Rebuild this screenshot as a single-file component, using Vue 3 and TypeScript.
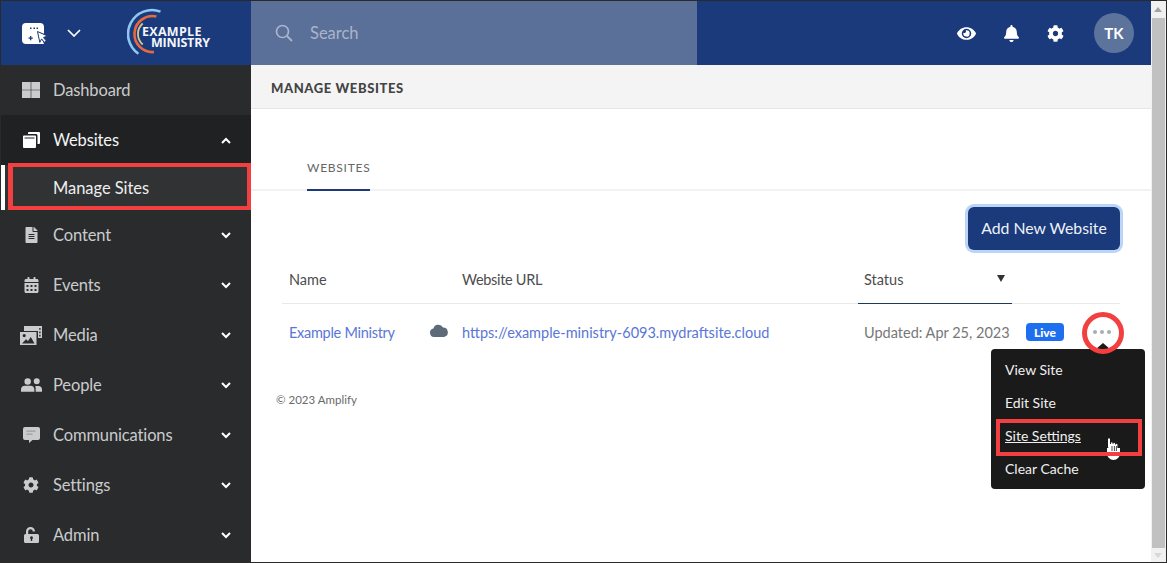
<script setup lang="ts">
interface Icon { vb: string; d: string; d2?: string }
const icons: Record<string, Icon> = {
  dash: { vb: '0 0 18 16', d: 'M0 0h8.700v7.700H0zM9.300 0H18v7.700H9.300zM0 8.300h8.700V16H0zM9.300 8.300H18V16H9.300z' },
  web: { vb: '0 0 17 16', d: 'M5 2V1a1 1 0 0 1 1-1h10a1 1 0 0 1 1 1v10a1 1 0 0 1-1 1h-1.500V3.500A1.500 1.500 0 0 0 13 2zM1 3.400h11a1 1 0 0 1 1 1V15a1 1 0 0 1-1 1H1a1 1 0 0 1-1-1V4.400a1 1 0 0 1 1-1zm.5 2.200v.9h10v-.9z' },
  content: { vb: '0 0 384 512', d: 'M224 136V0H24C10.700 0 0 10.700 0 24v464c0 13.300 10.700 24 24 24h336c13.300 0 24-10.700 24-24V160H248c-13.200 0-24-10.800-24-24zm64 236c0 6.600-5.400 12-12 12H108c-6.600 0-12-5.400-12-12v-8c0-6.600 5.400-12 12-12h168c6.600 0 12 5.400 12 12v8zm0-64c0 6.600-5.400 12-12 12H108c-6.600 0-12-5.400-12-12v-8c0-6.600 5.400-12 12-12h168c6.600 0 12 5.400 12 12v8zm0-72v8c0 6.600-5.400 12-12 12H108c-6.600 0-12-5.400-12-12v-8c0-6.600 5.400-12 12-12h168c6.600 0 12 5.400 12 12zm96-114.100v6.100H256V0h6.100c6.400 0 12.500 2.500 17 7l97.900 98c4.500 4.500 7 10.600 7 16.900z' },
  events: { vb: '0 0 448 512', d: 'M0 464c0 26.500 21.500 48 48 48h352c26.500 0 48-21.500 48-48V192H0v272zm320-196c0-6.600 5.400-12 12-12h40c6.600 0 12 5.400 12 12v40c0 6.600-5.400 12-12 12h-40c-6.600 0-12-5.400-12-12v-40zm0 128c0-6.600 5.400-12 12-12h40c6.600 0 12 5.400 12 12v40c0 6.600-5.400 12-12 12h-40c-6.600 0-12-5.400-12-12v-40zM192 268c0-6.600 5.400-12 12-12h40c6.600 0 12 5.400 12 12v40c0 6.600-5.400 12-12 12h-40c-6.600 0-12-5.400-12-12v-40zm0 128c0-6.600 5.400-12 12-12h40c6.600 0 12 5.400 12 12v40c0 6.600-5.400 12-12 12h-40c-6.600 0-12-5.400-12-12v-40zM64 268c0-6.600 5.400-12 12-12h40c6.600 0 12 5.400 12 12v40c0 6.600-5.400 12-12 12H76c-6.600 0-12-5.400-12-12v-40zm0 128c0-6.600 5.400-12 12-12h40c6.600 0 12 5.400 12 12v40c0 6.600-5.400 12-12 12H76c-6.600 0-12-5.400-12-12v-40zM400 64h-48V16c0-8.800-7.200-16-16-16h-32c-8.800 0-16 7.200-16 16v48H160V16c0-8.800-7.200-16-16-16h-32c-8.800 0-16 7.200-16 16v48H48C21.500 64 0 85.500 0 112v48h448v-48c0-26.500-21.500-48-48-48z' },
  media: { vb: '0 0 22 19', d: 'M4 0h18v12h-4V5H4zM19.200 2v1.800h1.400V2zm0 3.400v1.800h1.400V5.400zm0 3.400v1.800h1.400V8.800zM0 6h16.500v13H0zm4.200 2a1.600 1.600 0 1 0 0 3.200 1.600 1.600 0 0 0 0-3.200zM2 17.500h12.500L10.800 11 8 15l-2-1.800z' },
  people: { vb: '0 0 22 14', d: 'M7 0a3.400 3.400 0 1 1 0 6.800A3.400 3.400 0 0 1 7 0zm9.500 0a3.100 3.100 0 1 1 0 6.300 3.100 3.100 0 0 1 0-6.300zM4 7.800h6c2.400 0 4 1.800 4 4V14H0v-2.200c0-2.200 1.600-4 4-4zm11 .2h3.500c2 0 3.500 1.500 3.500 3.500V14h-6.600v-2.500c0-1.300-.2-2.500-.4-3.500z' },
  comm: { vb: '0 0 17 16', d: 'M2 0h13a2 2 0 0 1 2 2v9a2 2 0 0 1-2 2H9.500L6 16v-3H2a2 2 0 0 1-2-2V2a2 2 0 0 1 2-2z', d2: 'M3.500 3.500h9v1.200h-9zm0 3h6v1.200h-6z' },
  settings: { vb: '0 0 512 512', d: 'M487.400 315.700l-42.600-24.600c4.300-23.200 4.300-47 0-70.200l42.600-24.600c4.900-2.800 7.100-8.600 5.500-14-11.100-35.600-30-67.800-54.700-94.600-3.800-4.100-10-5.100-14.800-2.300L380.800 110c-17.900-15.400-38.500-27.300-60.800-35.100V25.800c0-5.600-3.900-10.500-9.400-11.700-36.700-8.200-74.300-7.800-109.200 0-5.500 1.200-9.400 6.100-9.400 11.700V75c-22.200 7.900-42.800 19.800-60.800 35.100L88.700 85.500c-4.900-2.800-11-1.900-14.800 2.300-24.700 26.700-43.600 58.900-54.700 94.600-1.700 5.400.6 11.200 5.500 14L67.300 221c-4.300 23.200-4.300 47 0 70.200l-42.600 24.600c-4.900 2.800-7.100 8.600-5.500 14 11.100 35.600 30 67.800 54.700 94.600 3.800 4.100 10 5.100 14.800 2.300l42.600-24.600c17.900 15.400 38.500 27.300 60.800 35.100v49.200c0 5.600 3.900 10.500 9.400 11.700 36.700 8.200 74.300 7.800 109.200 0 5.500-1.200 9.400-6.100 9.400-11.700v-49.200c22.200-7.900 42.800-19.800 60.800-35.100l42.600 24.600c4.900 2.800 11 1.900 14.800-2.300 24.700-26.700 43.600-58.900 54.700-94.600 1.500-5.500-.7-11.300-5.600-14.100zM256 336c-44.100 0-80-35.900-80-80s35.900-80 80-80 80 35.900 80 80-35.900 80-80 80z' },
  admin: { vb: '0 0 15 16', d: 'M2 7V4.500a4.500 4.500 0 0 1 9 0H8.800a2.300 2.300 0 0 0-4.600 0V7h9.300A1.500 1.500 0 0 1 15 8.500v6a1.500 1.500 0 0 1-1.500 1.500h-12A1.500 1.500 0 0 1 0 14.500v-6A1.500 1.500 0 0 1 1.500 7zm5.500 2.300a1.500 1.500 0 0 0-.7 2.800v1.800h1.400v-1.800a1.500 1.500 0 0 0-.7-2.800z' },
}
const eye = 'M572.520 241.400C518.290 135.590 410.930 64 288 64S57.680 135.640 3.480 241.410a32.350 32.350 0 0 0 0 29.190C57.710 376.410 165.070 448 288 448s230.320-71.640 284.520-177.410a32.350 32.350 0 0 0 0-29.190zM288 400a144 144 0 1 1 144-144 143.930 143.930 0 0 1-144 144zm0-240a95.310 95.310 0 0 0-25.310 3.790 47.850 47.850 0 0 1-66.900 66.900A95.780 95.780 0 1 0 288 160z'
const bell = 'M224 512c35.320 0 63.970-28.650 63.970-64H160.030c0 35.350 28.650 64 63.970 64zm215.390-149.710c-19.320-20.760-55.470-51.990-55.470-154.290 0-77.700-54.480-139.900-127.940-155.160V32c0-17.670-14.320-32-31.980-32s-31.980 14.330-31.980 32v20.840C118.560 68.100 64.080 130.300 64.080 208c0 102.300-36.150 133.530-55.470 154.290-6 6.450-8.660 14.160-8.610 21.710.11 16.400 12.980 32 32.100 32h383.800c19.120 0 32-15.600 32.100-32 .05-7.550-2.610-15.270-8.610-21.710z'
const nav = [
  { key: 'content', label: 'Content', w: 15, h: 16 },
  { key: 'events', label: 'Events', w: 15, h: 16 },
  { key: 'media', label: 'Media', w: 22, h: 19 },
  { key: 'people', label: 'People', w: 21, h: 14 },
  { key: 'comm', label: 'Communications', w: 17, h: 16 },
  { key: 'settings', label: 'Settings', w: 16, h: 16 },
  { key: 'admin', label: 'Admin', w: 15, h: 16 },
]
const menu = ['View Site', 'Edit Site', 'Site Settings', 'Clear Cache']
</script>

<template>
  <div class="frame">
    <div class="app">
      <aside class="side">
        <div class="brand">
          <svg class="appicon" viewBox="0 0 26 21" width="26" height="21">
            <path fill="#fff" d="M4 0h14a4 4 0 0 1 4 4v7l-5-2 5 12H4a4 4 0 0 1-4-4V4a4 4 0 0 1 4-4z" />
            <path fill="#1a3a7c" d="M8 4.500h1.500V6H8zm3.500 0H13V6h-1.500zM14.500 4.500H16V6h-1.500zM8 13h1.300v1.500h1.500v1.300H9.300v1.500H8v-1.500H6.500v-1.300H8z" />
            <path fill="#fff" stroke="#1a3a7c" stroke-width="1" d="M15.500 8.500l10 4.500-4 1.500 2.700 3.300-1.900 1.500-2.700-3.400-1.800 3.500z" />
          </svg>
          <svg class="chev" viewBox="0 0 14 8" width="14" height="8"><path d="M1 1l6 6 6-6" fill="none" stroke="#fff" stroke-width="1.700" /></svg>
          <div class="logo">
            <svg viewBox="0 0 52 52" width="52" height="52" class="arcs">
              <path d="M33.500 4.600A24 24 0 0 0 11.400 46.800" fill="none" stroke="#8fc7f0" stroke-width="2.600" />
              <path d="M29.400 9.500A18 18 0 1 0 27 45" fill="none" stroke="#e8693f" stroke-width="2.600" />
              <path d="M15.700 16.500A14 14 0 0 0 15.700 37.500" fill="none" stroke="#d9c48c" stroke-width="1.800" />
            </svg>
            <div class="logotext"><span>EXAMPLE</span><span class="l2">MINISTRY</span></div>
          </div>
        </div>
        <div class="item">
          <span class="ico"><svg :viewBox="icons.dash.vb" width="18" height="16"><path :d="icons.dash.d" /></svg></span>
          <span>Dashboard</span>
        </div>
        <div class="item open">
          <span class="ico"><svg :viewBox="icons.web.vb" width="17" height="16"><path fill-rule="evenodd" :d="icons.web.d" /></svg></span>
          <span>Websites</span>
          <svg class="caret" viewBox="0 0 10 7" width="10" height="7"><path d="M1 6l4-4 4 4" fill="none" stroke="#fff" stroke-width="2" /></svg>
        </div>
        <div class="sub">Manage Sites</div>
        <div v-for="n in nav" :key="n.key" class="item">
          <span class="ico">
            <svg :viewBox="icons[n.key].vb" :width="n.w" :height="n.h">
              <path :d="icons[n.key].d" />
              <path v-if="icons[n.key].d2" class="inner" :d="icons[n.key].d2" />
            </svg>
          </span>
          <span>{{ n.label }}</span>
          <svg class="caret" viewBox="0 0 10 7" width="10" height="7"><path d="M1 1l4 4 4-4" fill="none" stroke="#fff" stroke-width="2" /></svg>
        </div>
      </aside>

      <div class="right">
        <header class="top">
          <div class="search">
            <svg viewBox="0 0 18 18" width="18" height="18"><circle cx="7.500" cy="7.500" r="6" fill="none" stroke="#a9b5cb" stroke-width="1.700" /><path d="M12 12l5 5" stroke="#a9b5cb" stroke-width="1.800" /></svg>
            <span>Search</span>
          </div>
          <div class="tools">
            <svg viewBox="0 0 576 512" width="19" height="17"><path :d="eye" /></svg>
            <svg viewBox="0 0 448 512" width="15" height="17"><path :d="bell" /></svg>
            <svg viewBox="0 0 512 512" width="17" height="17"><path :d="icons.settings.d" /></svg>
            <div class="avatar">TK</div>
          </div>
        </header>
        <div class="title">MANAGE WEBSITES</div>
        <div class="tabs"><span class="tab">WEBSITES</span></div>
        <div class="actions"><button class="add">Add New Website</button></div>
        <div class="table">
          <div class="row head">
            <span class="c1">Name</span>
            <span class="c2 hurl">Website URL</span>
            <span class="c3 sort">Status<i class="tri"></i></span>
          </div>
          <div class="row body">
            <a class="c1 link name">Example Ministry</a>
            <svg class="cloud" viewBox="0 0 18 13" width="18" height="13"><path fill="#5d6a78" d="M4.500 13A4.300 4.300 0 0 1 3.400 4.500 5.200 5.200 0 0 1 13 3.500 4.800 4.800 0 0 1 14 13z" /></svg>
            <a class="c2 link">https://example-ministry-6093.mydraftsite.cloud</a>
            <span class="c3 upd">Updated: Apr 25, 2023</span>
            <span class="live">Live</span>
            <span class="dots"><i></i><i></i><i></i></span>
          </div>
        </div>
        <footer class="foot">© 2023 Amplify</footer>
      </div>

      <div class="scroll"><div class="up"></div><div class="thumb"></div><div class="down"></div></div>

      <div class="menu">
        <span class="arrow"></span>
        <div v-for="m in menu" :key="m" class="mi" :class="{ hov: m === 'Site Settings' }">{{ m }}</div>
      </div>
      <div class="mark-sub"></div>
      <div class="clickdot"></div>
      <svg class="hand" viewBox="0 0 12 13" width="12" height="13">
        <path fill="#fff" d="M1 1.200a1 1 0 0 1 2 0V6h1V5a.8.8 0 0 1 1.600 0v1h.8v-.4a.8.8 0 0 1 1.600 0V6.500h.8a.8.8 0 0 1 1.600 0V13H3L1 9z" />
        <path stroke="#1a1a1a" stroke-width=".8" d="M5 8v5M7.400 8v5M9.400 8v5" />
      </svg>
      <div class="mark-menu"></div>
      <div class="ring"></div>
    </div>
  </div>
</template>

<style>
html, body { margin: 0; background: #fff; overflow: hidden; }
</style>

<style scoped>
.frame { width: 1167px; height: 563px; box-sizing: border-box; border: 1px solid #2a2a2a; overflow: hidden; font-family: Lato, "Open Sans", sans-serif; }
.app { position: relative; display: grid; grid-template-columns: 250px 1fr 15px; height: 561px; background: #fff; }
.side { background: #292b2d; color: #c9cbcc; display: flex; flex-direction: column; overflow: hidden; }
.brand { height: 64px; flex: none; background: #1a3a7c; display: flex; align-items: center; padding-left: 21px; box-sizing: border-box; position: relative; }
.chev { margin-left: 19px; }
.logo { margin-left: 46px; position: relative; height: 52px; width: 90px; }
.arcs { position: absolute; left: 0; top: 0; }
.logotext { position: absolute; left: 15px; top: 20px; display: flex; flex-direction: column; color: #f4f6fa; font-family: "Open Sans", sans-serif; font-weight: 700; font-size: 12.500px; line-height: 10.500px; letter-spacing: .3px; white-space: nowrap; }
.l2 { margin-left: 9px; letter-spacing: -.2px; }
.item { height: 50px; flex: none; display: flex; align-items: center; position: relative; font-size: 16.500px; letter-spacing: -.13px; }
.ico { width: 60px; margin-right: -8px; display: flex; justify-content: center; }
.ico svg { fill: #c9cbcc; }
.ico .inner { fill: #9b9d9f; }
.item.open { background: #1f2123; color: #f4f5f5; }
.item.open .ico svg { fill: #fff; }
.caret { position: absolute; left: 220px; top: 22px; }
.sub { height: 45px; flex: none; background: #303234; color: #eeeeee; font-size: 16.500px; letter-spacing: -.05px; display: flex; align-items: center; border-left: 4px solid #fff; box-sizing: border-box; padding-left: 48px; }
.right { display: flex; flex-direction: column; min-width: 0; color: #4a4a4a; }
.top { height: 64px; flex: none; background: #1a3a7c; display: flex; align-items: stretch; }
.search { width: 447px; margin-left: -1px; background: #5a7098; display: flex; align-items: center; padding-left: 25px; box-sizing: border-box; gap: 17px; color: #a9b5cb; font-size: 16.500px; }
.tools { margin-left: auto; display: flex; align-items: center; padding-right: 17px; }
.tools svg { fill: #fff; }
.tools svg:nth-child(1) { margin-right: 28px; }
.tools svg:nth-child(2) { margin-right: 28px; }
.tools svg:nth-child(3) { margin-right: 30px; }
.avatar { width: 40px; height: 40px; border-radius: 50%; background: #5c739c; color: #fff; font-size: 15px; font-weight: 700; display: flex; align-items: center; justify-content: center; }
.title { height: 44px; flex: none; background: #f4f4f4; border-bottom: 1px solid #e6e6e6; display: flex; align-items: center; padding: 2px 0 0 20px; font-size: 13px; font-weight: 900; color: #444; letter-spacing: .6px; box-sizing: border-box; }
.tabs { height: 82px; flex: none; box-sizing: border-box; border-bottom: 2px solid #f2f2f2; padding-left: 56px; display: flex; align-items: flex-end; }
.tab { height: 40px; box-sizing: border-box; margin-bottom: -2px; padding: 9px 0 0 0; border-bottom: 2px solid #1a3a7c; font-size: 12px; letter-spacing: .75px; color: #666; width: 63px; white-space: nowrap; }
.actions { display: flex; justify-content: flex-end; padding: 16px 31px 0 0; }
.add { height: 43px; width: 152px; box-sizing: border-box; background: #1a3a7c; border: none; border-radius: 6px; box-shadow: 0 0 0 3px #bcd4f5; color: #eef1f7; font: 400 15.800px Lato, sans-serif; padding: 0 0 3px; }
.table { margin: 7px 31px 0 31px; }
.row { display: flex; align-items: center; position: relative; }
.head { height: 47px; box-sizing: border-box; border-bottom: 1px solid #e9e9e9; padding-bottom: 2px; font-size: 14.500px; color: #4d4d4d; }
.body { height: 56px; font-size: 14.500px; }
.c1 { width: 180px; padding-left: 7px; box-sizing: border-box; flex: none; }
.c2 { flex: none; width: 402px; }
.hurl { letter-spacing: -.3px; }
.name { letter-spacing: -.28px; }
.sort { width: 154px; height: 47px; align-self: flex-start; display: flex; align-items: center; margin-left: -6px; padding: 0 0 2px 6px; box-sizing: border-box; border-bottom: 1px solid #1a3a55; position: relative; }
.tri { position: absolute; right: 7px; top: 18px; border-left: 4px solid transparent; border-right: 4px solid transparent; border-top: 7px solid #333; }
.link { color: #5a76d6; }
.cloud { position: absolute; left: 148px; top: 20px; }
.upd { color: #777; flex: none; white-space: nowrap; width: 162px; }
.live { background: #1e6ff0; color: #fff; font-size: 12px; font-weight: 900; border-radius: 4px; width: 38px; height: 18px; display: flex; align-items: center; justify-content: center; flex: none; }
.dots { display: flex; gap: 3px; margin-left: 29px; }
.dots i { width: 4px; height: 4px; border-radius: 50%; background: #a9adb3; display: block; }
.foot { margin: 33px 0 0 25px; font-size: 11.500px; color: #6a6a6a; }
.scroll { background: #f1f1f1; display: flex; flex-direction: column; }
.up { height: 17px; position: relative; flex: none; }
.up::after { content: ""; position: absolute; left: 3px; top: 6px; border-left: 4.500px solid transparent; border-right: 4.500px solid transparent; border-bottom: 5px solid #a3a3a3; }
.thumb { background: #c1c1c1; height: 530px; margin-left: 1px; margin-right: 1px; flex: none; }
.down { flex: 1; position: relative; }
.down::after { content: ""; position: absolute; left: 3px; top: 5px; border-left: 4.500px solid transparent; border-right: 4.500px solid transparent; border-top: 5px solid #d8d8d8; }
.menu { position: absolute; left: 990px; top: 348px; width: 154px; height: 140px; background: #1a1a1a; border-radius: 4px; padding-top: 4px; box-sizing: border-box; color: #f0f0f0; font-size: 14px; }
.arrow { position: absolute; left: 105px; top: -6px; border-left: 7px solid transparent; border-right: 7px solid transparent; border-bottom: 6px solid #1a1a1a; }
.mi { height: 33px; display: flex; align-items: center; padding-left: 14px; }
.mi.hov { text-decoration: underline; }
.mark-sub { position: absolute; left: 7px; top: 162px; width: 243px; height: 47px; border: 4px solid #f24040; border-left-width: 5px; box-sizing: border-box; }
.mark-menu { position: absolute; left: 995px; top: 418px; width: 146px; height: 37px; border: 4px solid #f24040; box-sizing: border-box; }
.ring { position: absolute; left: 1081px; top: 311px; width: 42px; height: 42px; border: 5px solid #f24040; border-radius: 50%; box-sizing: border-box; }
.clickdot { position: absolute; left: 1106px; top: 447px; width: 13px; height: 12px; background: #fff; border-radius: 0 0 7px 7px; }
.hand { position: absolute; left: 1106px; top: 437px; }
</style>
